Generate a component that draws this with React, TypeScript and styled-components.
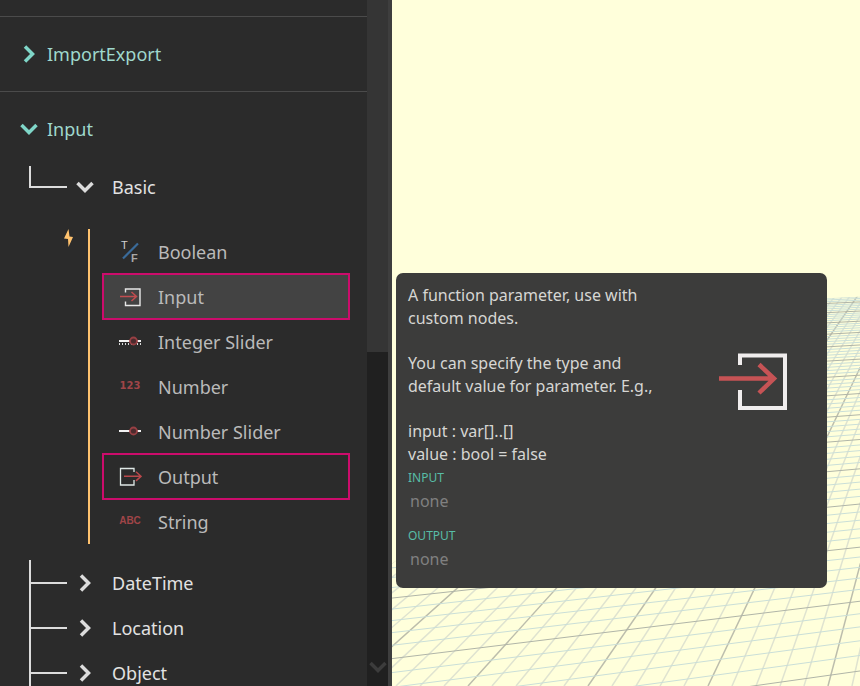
import React from "react";
import styled, { createGlobalStyle } from "styled-components";

const GlobalStyle = createGlobalStyle`
  * { box-sizing: border-box; }
  body { margin: 0; background: #2b2b2b; overflow: hidden; }
  button { font: inherit; color: inherit; background: none; border: 0; padding: 0; text-align: left; cursor: pointer; }
  svg { display: block; }
`;

const Page = styled.div`
  display: flex;
  height: 100vh;
  overflow: hidden;
  font-family: "Noto Sans", "Open Sans", sans-serif;
  font-size: 18px;
  line-height: 24px;
`;

const Library = styled.nav`
  display: flex;
  flex: 0 0 392px;
  background: #2b2b2b;
  border-right: 4px solid #3e3e3e;
`;

const Tree = styled.div`
  flex: 1;
  min-width: 0;
  overflow: hidden;
`;

const PreviousCategory = styled.div`
  height: 17px;
  border-bottom: 1px solid #4b4b4b;
`;

const CategoryButton = styled.button<{ $divided?: boolean }>`
  display: flex;
  align-items: center;
  gap: 9px;
  width: 100%;
  height: ${(p) => (p.$divided ? 75 : 74)}px;
  padding-left: 20px;
  color: #9fd8cd;
  border-bottom: ${(p) => (p.$divided ? "1px solid #4b4b4b" : "0")};
`;

const GroupButton = styled.button<{ $first?: boolean }>`
  display: flex;
  align-items: center;
  width: 100%;
  height: ${(p) => (p.$first ? 42 : 45)}px;
  padding-left: 29px;
  color: #e2e2e2;
`;

const Branch = styled.span<{ $last?: boolean }>`
  display: flex;
  align-items: center;
  align-self: stretch;
  width: 38px;
  margin-right: 9px;
  background: linear-gradient(#dcdcdc, #dcdcdc) 0 0 / 2px ${(p) => (p.$last ? "50%" : "100%")} no-repeat;

  &::after {
    content: "";
    width: 100%;
    height: 2px;
    background: #dcdcdc;
  }
`;

const GroupLabel = styled.span`
  margin-left: 18px;
`;

const NodeSection = styled.div`
  display: flex;
  margin: 21px 17px 16px 63px;
`;

const BoltSlot = styled.span`
  width: 25px;
`;

const NodeList = styled.div`
  flex: 1;
  display: flex;
  flex-direction: column;
  padding-left: 12px;
  border-left: 2px solid #ffc26e;
`;

const NodeButton = styled.button<{ $active?: boolean; $framed?: boolean }>`
  display: flex;
  align-items: center;
  gap: 16px;
  height: ${(p) => (p.$framed ? 47 : 45)}px;
  margin: ${(p) => (p.$framed ? "-1px 0" : "0")};
  padding-left: 14px;
  color: #bababa;
  border: 2px solid ${(p) => (p.$framed ? "#cc0c6c" : "transparent")};
  background: ${(p) => (p.$active ? "#434343" : "transparent")};
`;

const ScrollTrack = styled.div`
  display: flex;
  flex-direction: column;
  justify-content: space-between;
  align-items: center;
  width: 21px;
  padding-bottom: 10px;
  background: #202020;
`;

const ScrollThumb = styled.div`
  width: 100%;
  height: 52%;
  background: #353535;
`;

const Workspace = styled.main`
  position: relative;
  flex: 1;
  min-width: 0;
  background: #ffffdb;
`;

const GridView = styled.svg`
  width: 100%;
  height: 100%;
`;

const Tooltip = styled.aside`
  position: absolute;
  top: 273px;
  left: 4px;
  right: 33px;
  display: flex;
  justify-content: space-between;
  padding: 11px 36px 17px 12px;
  border-radius: 7px;
  background: #3c3c3b;
  color: #d6d6d3;
  font-size: 16px;
  line-height: 23px;
`;

const Description = styled.div`
  width: 264px;
`;

const Paragraph = styled.p<{ $last?: boolean }>`
  margin: 0 0 ${(p) => (p.$last ? 0 : 22)}px;
`;

const PortTitle = styled.h3`
  margin: 0;
  color: #58bda7;
  font-size: 12px;
  font-weight: 400;
  line-height: 24px;
`;

const PortValue = styled.p<{ $spaced?: boolean }>`
  margin: 0 0 ${(p) => (p.$spaced ? 11 : 0)}px;
  padding-left: 2px;
  color: #808080;
`;

const PreviewSlot = styled.div`
  padding-top: 67px;
`;

const Chevron = ({ open = false, color = "#dcdcdc" }: { open?: boolean; color?: string }) => (
  <svg width="18" height="18" viewBox="0 0 18 18" fill="none" stroke={color} strokeWidth="3.5" aria-hidden="true">
    <path d={open ? "M1.5 5 9 12.5 16.5 5" : "M5 1.500 12.5 9 5 16.500"} />
  </svg>
);

const BoltIcon = () => (
  <svg width="11" height="18" viewBox="0 0 11 18" aria-hidden="true">
    <path d="M5.500 0 1 9.500l4 .5.500 8L10 8 6.500 7.500Z" fill="#ffc26e" />
  </svg>
);

const ArrowBox = ({ output = false }: { output?: boolean }) => (
  <svg width="24" height="24" viewBox="0 0 24 24" fill="none" aria-hidden="true">
    {output ? (
      <>
        <path d="M16 7V3.500H2.500v16.500H16v-5" stroke="#dfe8e6" strokeWidth="1.3" />
        <path d="M6 11.3h17M18 6.7l5 4.6-5 4.6" stroke="#b9484b" strokeWidth="1.5" />
      </>
    ) : (
      <>
        <path d="M7.500 7.500V4H22v16.500H7.500V16.500" stroke="#e8e8e8" strokeWidth="1.400" />
        <path d="M2 11.500h16.500M13.500 7l5 4.500-5 4.500" stroke="#c04d50" strokeWidth="1.5" />
      </>
    )}
  </svg>
);

const PreviewIcon = () => (
  <svg width="72" height="60" viewBox="0 0 72 60" fill="none" aria-hidden="true">
    <path d="M21 14V4.500H66V57H21V39" stroke="#f0eded" strokeWidth="4" />
    <path d="M0 27.500h55M40 13.500 55 27.500 40 42" stroke="#c65355" strokeWidth="4.500" />
  </svg>
);

const BooleanIcon = () => (
  <svg width="24" height="24" viewBox="0 0 24 24" aria-hidden="true">
    <path d="M5 18.500 20 3.500" stroke="#3a6b9a" strokeWidth="2.200" />
    <text x="3" y="9" fill="#d0d0d0" fontSize="11" fontFamily="Liberation Sans">T</text>
    <text x="13" y="21.500" fill="#a8a8a8" fontSize="11" fontWeight="700" fontFamily="Liberation Sans">F</text>
  </svg>
);

const SliderIcon = ({ ticks = false }: { ticks?: boolean }) => (
  <svg width="24" height="24" viewBox="0 0 24 24" fill="none" aria-hidden="true">
    <path d="M1 11h22" stroke="#f2f2f2" strokeWidth="2" />
    {ticks && <path d="M1 14h22" stroke="#d8d8d8" strokeWidth="2" strokeDasharray="1 2" />}
    <circle cx="15.500" cy="11" r="3.500" fill="#4b2b2e" stroke="#984044" strokeWidth="1.800" />
  </svg>
);

const WordIcon = ({ text, font }: { text: string; font: string }) => (
  <svg width="24" height="24" viewBox="0 0 24 24" aria-hidden="true">
    <text x="12" y="14" textAnchor="middle" fill="#a04548" fontSize="10" fontWeight="700" fontFamily={font}>
      {text}
    </text>
  </svg>
);

type NodeEntry = { label: string; icon: React.ReactNode; active?: boolean; framed?: boolean };

const nodes: NodeEntry[] = [
  { label: "Boolean", icon: <BooleanIcon /> },
  { label: "Input", icon: <ArrowBox />, active: true, framed: true },
  { label: "Integer Slider", icon: <SliderIcon ticks /> },
  { label: "Number", icon: <WordIcon text="123" font="DejaVu Sans" /> },
  { label: "Number Slider", icon: <SliderIcon /> },
  { label: "Output", icon: <ArrowBox output />, framed: true },
  { label: "String", icon: <WordIcon text="ABC" font="Liberation Sans" /> },
];

const HORIZON = 123;
const crossVanish = { x: 4368, y: HORIZON };
const depthVanish = { x: 585, y: HORIZON };
const rowAt = (n: number) => 120 + 1 / (0.001815 + 0.000263 * n);
const rightEdge = 468;
const bottom = 686;

const edgeX = (y: number) => depthVanish.x + ((-164 - depthVanish.x) * (y - HORIZON)) / (bottom - HORIZON);

const PerspectiveGrid = () => {
  const rows = Array.from({ length: 80 }, (_, i) => i - 5);
  const columns = Array.from({ length: 36 }, (_, i) => i);
  const far = rowAt(14.6);
  const farSlope = (far - crossVanish.y) / (crossVanish.x - rightEdge);
  const farLeftX = edgeX(far + 10);
  const farLeftY = far + farSlope * (rightEdge - farLeftX);
  return (
    <GridView viewBox="0 0 468 686" preserveAspectRatio="xMidYMid slice" aria-hidden="true">
      <defs>
        <clipPath id="plane">
          <polygon points={`${farLeftX},${farLeftY} 868,${far - farSlope * 400} 868,900 -438,900`} />
        </clipPath>
      </defs>
      <g clipPath="url(#plane)">
        {columns.map((i) => (
          <line
            key={i}
            x1={depthVanish.x}
            y1={depthVanish.y}
            x2={-164 + i * 24}
            y2={bottom}
            stroke={i % 5 === 0 ? "#bcbdac" : "#dfe3d0"}
            strokeWidth={1.5}
          />
        ))}
        {rows.map((i) => {
          const y = rowAt(i / 5);
          const slope = (y - crossVanish.y) / (crossVanish.x - rightEdge);
          return (
            <line
              key={i}
              x1={-400}
              y1={y + slope * (rightEdge + 400)}
              x2={868}
              y2={y - slope * 400}
              stroke={i % 5 === 0 ? "#b0b5a8" : "#cadfd8"}
            />
          );
        })}
      </g>
    </GridView>
  );
};

export default function App() {
  return (
    <Page>
      <GlobalStyle />
      <Library aria-label="Library">
        <Tree>
          <PreviousCategory />
          <CategoryButton $divided>
            <Chevron color="#7fd6c8" />
            ImportExport
          </CategoryButton>
          <CategoryButton aria-expanded>
            <Chevron open color="#7fd6c8" />
            Input
          </CategoryButton>
          <GroupButton $first aria-expanded>
            <Branch $last />
            <Chevron open />
            <GroupLabel>Basic</GroupLabel>
          </GroupButton>
          <NodeSection>
            <BoltSlot>
              <BoltIcon />
            </BoltSlot>
            <NodeList>
              {nodes.map((n) => (
                <NodeButton key={n.label} $active={n.active} $framed={n.framed}>
                  {n.icon}
                  {n.label}
                </NodeButton>
              ))}
            </NodeList>
          </NodeSection>
          {["DateTime", "Location", "Object"].map((name) => (
            <GroupButton key={name}>
              <Branch />
              <Chevron />
              <GroupLabel>{name}</GroupLabel>
            </GroupButton>
          ))}
        </Tree>
        <ScrollTrack>
          <ScrollThumb />
          <Chevron open color="#3c3c3c" />
        </ScrollTrack>
      </Library>
      <Workspace>
        <PerspectiveGrid />
        <Tooltip role="tooltip">
          <Description>
            <Paragraph>A function parameter, use with custom nodes.</Paragraph>
            <Paragraph>You can specify the type and default value for parameter. E.g.,</Paragraph>
            <Paragraph $last>
              input : var[]..[]
              <br />
              value : bool = false
            </Paragraph>
            <PortTitle>INPUT</PortTitle>
            <PortValue $spaced>none</PortValue>
            <PortTitle>OUTPUT</PortTitle>
            <PortValue>none</PortValue>
          </Description>
          <PreviewSlot>
            <PreviewIcon />
          </PreviewSlot>
        </Tooltip>
      </Workspace>
    </Page>
  );
}
